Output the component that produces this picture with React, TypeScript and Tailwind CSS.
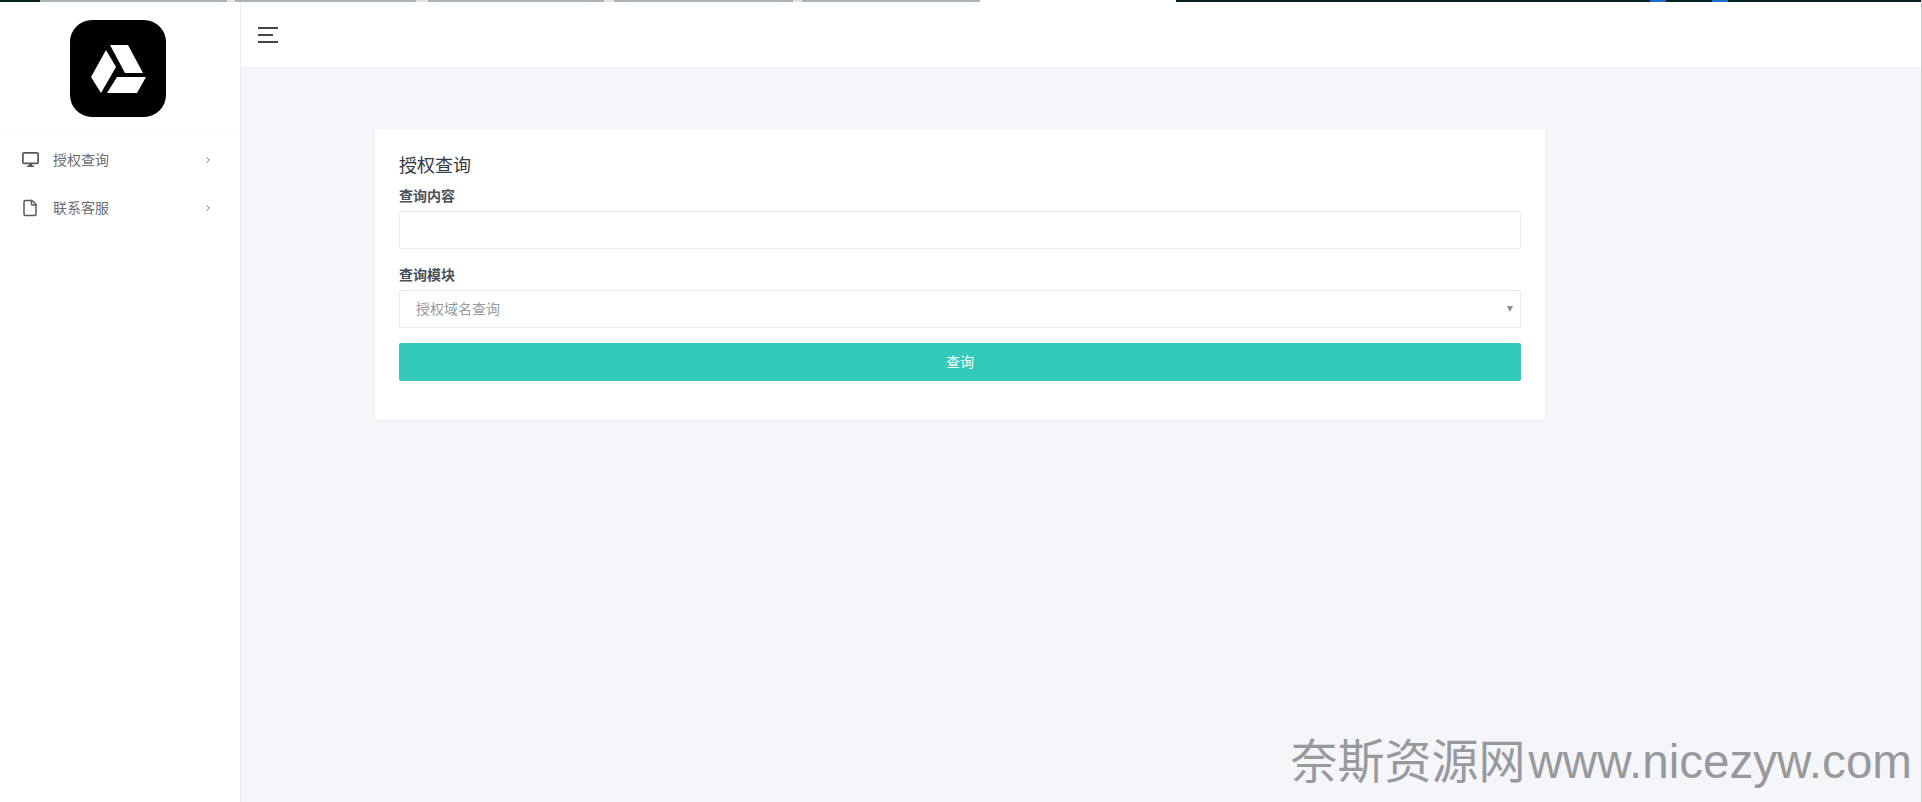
import { ChevronRight, File } from 'lucide-react';

const cjk = "font-['Liberation_Sans','Noto_Sans_CJK_SC',sans-serif]";

// tab strip left over at the top of the capture: [width, colour]
const strip: [number, string][] = [
  [40, '#06231f'],
  [187, '#adb3ae'],
  [8, '#e4e4e4'],
  [181, '#adb3ae'],
  [12, '#e4e4e4'],
  [176, '#adb3ae'],
  [10, '#e4e4e4'],
  [179, '#adb3ae'],
  [9, '#e4e4e4'],
  [178, '#adb3ae'],
  [196, '#ffffff'],
  [474, '#05201e'],
  [16, '#1c6fd0'],
  [46, '#05201e'],
  [16, '#1c6fd0'],
  [193, '#05201e'],
];

function DesktopIcon() {
  return (
    <svg width="17" height="16" viewBox="0 0 17 16" className="text-[#54595f]">
      <rect x="0.9" y="0.9" width="15.2" height="10.4" rx="1" fill="none" stroke="currentColor" strokeWidth="1.7" />
      <path d="M7 12h3v1.5h2V15H5v-1.5h2z" fill="currentColor" />
    </svg>
  );
}

function DocIcon() {
  return <File className="h-[18px] w-[18px] text-[#54595f]" strokeWidth={2} />;
}

const menu = [
  { icon: DesktopIcon, label: '授权查询' },
  { icon: DocIcon, label: '联系客服' },
];

function Logo() {
  return (
    <svg width="96" height="97" viewBox="0 0 96 97" className="block">
      <rect width="96" height="97" rx="22" fill="#000" />
      <polygon points="40,25 58,25 73,53 55,53" fill="#fff" />
      <polygon points="36,30 46,47 31,73 21,57" fill="#fff" />
      <polygon points="47,57 76,57 67,73 37,73" fill="#fff" />
    </svg>
  );
}

export default function App() {
  return (
    <div className={`${cjk} relative flex h-screen flex-col overflow-hidden border-r border-[#cccccc] bg-[#f5f6fa]`}>
      <div className="flex h-[2px] shrink-0">
        {strip.map(([width, color], i) => (
          <div key={i} className="shrink-0" style={{ width, backgroundColor: color }} />
        ))}
      </div>

      <div className="flex min-h-0 flex-1">
        <aside className="w-[241px] shrink-0 border-r border-[#ecedf2] bg-white">
          <div className="flex h-[133px] justify-center border-b border-[#fafafb] pr-[4px] pt-[18px]">
            <Logo />
          </div>
          <ul className="py-[1px]">
            {menu.map(({ icon: Icon, label }) => (
              <li key={label} className="flex h-[48px] items-center pl-[21px] pr-[27px] text-[14px] text-[#6b6b70]">
                <span className="flex w-[18px] justify-center">
                  <Icon />
                </span>
                <span className="ml-[14px] flex-1">{label}</span>
                <ChevronRight className="h-[10px] w-[10px] text-[#54595f]" strokeWidth={2} />
              </li>
            ))}
          </ul>
        </aside>

        <main className="min-w-0 flex-1">
          <header className="flex h-[66px] items-center border-b border-[#eeeff4] bg-white pl-[17px]">
            <svg width="20" height="16" viewBox="0 0 20 16" className="text-[#3f454b]">
              <path d="M0 1H20M0 8H15M0 15H20" stroke="currentColor" strokeWidth="2" fill="none" />
            </svg>
          </header>

          <div className="pl-[134px] pt-[61px]">
            <div className="w-[1170px] bg-white px-[24px] pb-[39px] pt-[24px] shadow-[0_1px_3px_rgba(60,60,90,0.08)]">
              <h4 className="text-[18px] leading-[26px] text-[#343a40]">授权查询</h4>
              <label className="mt-[7px] block text-[14px] font-bold leading-[20px] text-[#495057]">查询内容</label>
              <input className="mt-[5px] block h-[38px] w-full rounded-[2px] border border-[#ebebeb] px-[16px] outline-none" />
              <label className="mt-[16px] block text-[14px] font-bold leading-[20px] text-[#495057]">查询模块</label>
              <div className="mt-[5px] flex h-[38px] items-center justify-between rounded-[2px] border border-[#ebebeb] pl-[16px] pr-[7px] text-[14px] text-[#959aa0]">
                <span>授权域名查询</span>
                <span className="h-0 w-0 border-x-[3px] border-t-[6px] border-x-transparent border-t-[#868e96]" />
              </div>
              <button className="mt-[15px] block h-[38px] w-full rounded-[2px] bg-[#33cabb] text-[14px] text-white">
                查询
              </button>
            </div>
          </div>
        </main>
      </div>

      <div className="absolute bottom-[13px] right-[9px] flex items-baseline whitespace-nowrap leading-[54px] text-[#98999c]">
        <span className="mr-[3px] text-[47px]">奈斯资源网</span>
        <span className="text-[47.6px]">www.nicezyw.com</span>
      </div>
    </div>
  );
}
